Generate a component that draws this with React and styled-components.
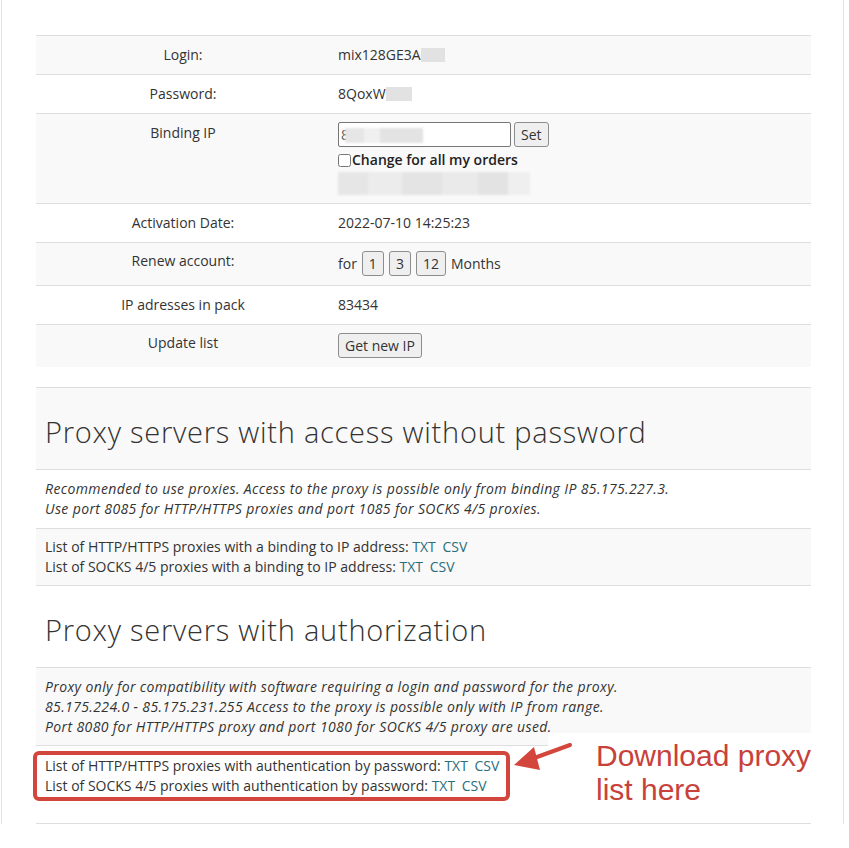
import React from "react";
import styled, { createGlobalStyle } from "styled-components";

const GlobalStyle = createGlobalStyle`
  body {
    margin: 0;
    background: #fff;
    font-family: "Open Sans", "Liberation Sans", Arial, sans-serif;
    font-size: 14px;
    color: #333;
  }
`;

export default function App() {
  return (
    <>
      <GlobalStyle />
      <Frame>
        <Table>
          <InfoRow $shade>
            <Label>Login:</Label>
            <Value>
              mix128GE3A<Redact $w={24} />
            </Value>
          </InfoRow>
          <InfoRow>
            <Label>Password:</Label>
            <Value>
              8QoxW<Redact $w={26} />
            </Value>
          </InfoRow>
          <InfoRow $shade>
            <Label>Binding IP</Label>
            <BindValue>
              <InputLine>
                <InputWrap>
                  <IpInput defaultValue="8" />
                  <InputBlur />
                </InputWrap>
                <Button>Set</Button>
              </InputLine>
              <CheckLabel>
                <input type="checkbox" />
                Change for all my orders
              </CheckLabel>
              <BlurLine>
                <BlurChunk $w={30} $c="#e6e6e6" />
                <BlurChunk $w={34} $c="#ececec" />
                <BlurChunk $w={40} $c="#e4e4e4" />
                <BlurChunk $w={36} $c="#eaeaea" />
                <BlurChunk $w={30} $c="#e3e3e3" />
                <BlurChunk $w={22} $c="#efefef" />
              </BlurLine>
            </BindValue>
          </InfoRow>
          <InfoRow>
            <Label>Activation Date:</Label>
            <Value>2022-07-10 14:25:23</Value>
          </InfoRow>
          <InfoRow $shade $tight>
            <Label>Renew account:</Label>
            <Value>
              <Inline>
                for
                <Button>1</Button>
                <Button>3</Button>
                <Button>12</Button>
                Months
              </Inline>
            </Value>
          </InfoRow>
          <InfoRow>
            <Label>IP adresses in pack</Label>
            <Value>83434</Value>
          </InfoRow>
          <InfoRow $shade $tight>
            <Label>Update list</Label>
            <Value>
              <Button>Get new IP</Button>
            </Value>
          </InfoRow>
          <Spacer />

          <HeadRow $shade>
            <Heading>Proxy servers with access without password</Heading>
          </HeadRow>
          <TextRow>
            <Note>
              Recommended to use proxies. Access to the proxy is possible only from binding IP 85.175.227.3.
              <br />
              Use port 8085 for HTTP/HTTPS proxies and port 1085 for SOCKS 4/5 proxies.
            </Note>
          </TextRow>
          <TextRow $shade $pad="8px 9px 8px">
            List of HTTP/HTTPS proxies with a binding to IP address: <Link>TXT</Link> <Link>CSV</Link>
            <br />
            List of SOCKS 4/5 proxies with a binding to IP address: <Link>TXT</Link> <Link>CSV</Link>
          </TextRow>

          <HeadRow>
            <Heading>Proxy servers with authorization</Heading>
          </HeadRow>
          <TextRow $shade $pad="9px 9px 8px">
            <Note>
              Proxy only for compatibility with software requiring a login and password for the proxy.
              <br />
              85.175.224.0 - 85.175.231.255 Access to the proxy is possible only with IP from range.
              <br />
              Port 8080 for HTTP/HTTPS proxy and port 1080 for SOCKS 4/5 proxy are used.
            </Note>
          </TextRow>
          <TextRow $pad="10px 9px 27px" $anchor>
            List of HTTP/HTTPS proxies with authentication by password: <Link>TXT</Link> <Link>CSV</Link>
            <br />
            List of SOCKS 4/5 proxies with authentication by password: <Link>TXT</Link> <Link>CSV</Link>
            <Highlight />
            <Callout>
              Download proxy
              <br />
              list here
            </Callout>
            <Arrow width="80" height="40" viewBox="0 0 80 40">
              <path d="M58 3 L14 19" stroke="#d4463c" strokeWidth="4" strokeLinecap="round" fill="none" />
              <path d="M2 23 L22 5 L28 28 Z" fill="#d4463c" />
            </Arrow>
          </TextRow>
        </Table>
      </Frame>
    </>
  );
}

const Frame = styled.div`
  margin: 0 5px 0 1px;
  border-left: 1px solid #e3e3e3;
  border-right: 1px solid #e3e3e3;
  padding: 35px 32px 0 34px;
`;

const Table = styled.div`
  border-bottom: 1px solid #dedede;
`;

const InfoRow = styled.div`
  display: grid;
  grid-template-columns: 294px 1fr;
  background: ${p => (p.$shade ? "#f9f9f9" : "#fff")};
  border-top: 1px solid #dedede;
  line-height: 20px;
  & > div {
    padding: ${p => (p.$tight ? "8px 8px 9px" : "9px 8px")};
  }
`;

const Label = styled.div`
  text-align: center;
`;

const Value = styled.div`
  text-align: left;
`;

const BindValue = styled.div`
  && {
    padding: 8px 8px 8px;
  }
  display: flex;
  flex-direction: column;
  align-items: flex-start;
`;

const Redact = styled.span`
  display: inline-block;
  width: ${p => p.$w}px;
  height: 14px;
  vertical-align: -2px;
  background: #e2e2e2;
  filter: blur(0.6px);
`;

const InputLine = styled.div`
  display: flex;
  gap: 3px;
  height: 25px;
`;

const InputWrap = styled.div`
  position: relative;
  width: 173px;
  height: 25px;
`;

const IpInput = styled.input`
  box-sizing: border-box;
  width: 100%;
  height: 25px;
  margin: 0;
  padding: 1px 2px;
  border: 1px solid #767676;
  border-radius: 2px;
  background: #fff;
  font-family: "Open Sans", Arial, sans-serif;
  font-size: 14px;
  color: #555;
`;

const InputBlur = styled.span`
  position: absolute;
  left: 7px;
  top: 6px;
  width: 78px;
  height: 15px;
  background: linear-gradient(90deg, #e6e6e6 0 25%, #f0f0f0 25% 45%, #e3e3e3 45% 100%);
  filter: blur(0.8px);
`;

const Button = styled.button`
  box-sizing: border-box;
  height: 25px;
  margin: 0;
  padding: 0 6px;
  border: 1px solid #8d8d8d;
  border-radius: 3px;
  background: #efefef;
  font-family: "Open Sans", Arial, sans-serif;
  font-size: 14px;
  line-height: 21px;
  color: #333;
`;

const CheckLabel = styled.label`
  display: flex;
  align-items: center;
  height: 20px;
  margin-top: 3px;
  font-weight: 600;
  color: #222;
  input {
    width: 13px;
    height: 13px;
    margin: 0 1px 0 0;
  }
`;

const BlurLine = styled.div`
  display: flex;
  margin-top: 2px;
  height: 23px;
  filter: blur(1px);
`;

const BlurChunk = styled.span`
  width: ${p => p.$w}px;
  background: ${p => p.$c};
`;

const Inline = styled.div`
  display: flex;
  align-items: center;
  gap: 5px;
`;

const Spacer = styled.div`
  height: 20px;
`;

const HeadRow = styled.div`
  background: ${p => (p.$shade ? "#f9f9f9" : "#fff")};
  border-top: 1px solid #dedede;
  padding: 27px 9px 20px;
`;

const Heading = styled.h2`
  margin: 0;
  font-family: "Open Sans", Lato, sans-serif;
  font-weight: 300;
  font-size: 29px;
  line-height: 34px;
  letter-spacing: 0.75px;
  color: #333;
`;

const TextRow = styled.div`
  position: ${p => (p.$anchor ? "relative" : "static")};
  background: ${p => (p.$shade ? "#f9f9f9" : "#fff")};
  border-top: 1px solid #dedede;
  padding: ${p => p.$pad || "9px 9px"};
  line-height: 20px;
`;

const Note = styled.i`
  font-style: italic;
  letter-spacing: 0.38px;
`;

const Link = styled.a`
  color: #2b6e7b;
  margin-right: 3px;
`;

const Highlight = styled.div`
  position: absolute;
  left: -3px;
  top: 5px;
  width: 477px;
  height: 50px;
  box-sizing: border-box;
  border: 4px solid #d3463d;
  border-radius: 6px;
`;

const Callout = styled.div`
  position: absolute;
  left: 512px;
  top: -13px;
  width: 263px;
  height: 79px;
  box-sizing: border-box;
  padding: 6px 0 0 48px;
  background: #fff;
  white-space: nowrap;
  font-family: "Liberation Sans", Arial, sans-serif;
  font-size: 30px;
  line-height: 34px;
  color: #c8413a;
`;

const Arrow = styled.svg`
  position: absolute;
  left: 476px;
  top: -4px;
`;
